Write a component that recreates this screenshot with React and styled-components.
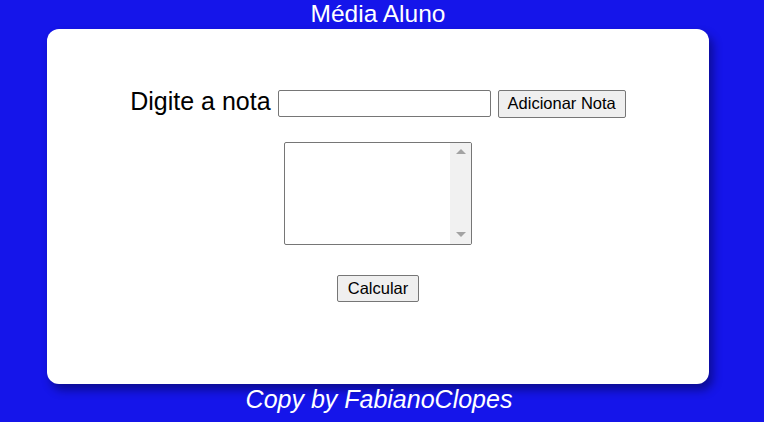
import React from "react";
import styled, { createGlobalStyle } from "styled-components";

const Global = createGlobalStyle`
  html, body { margin: 0; padding: 0; }
  body {
    background: #1515ea;
    font-family: "Liberation Sans", Arial, sans-serif;
    width: 764px;
    height: 422px;
    overflow: hidden;
  }
`;

const Page = styled.div`
  width: 756px;
  display: flex;
  flex-direction: column;
  align-items: center;
`;

const Title = styled.h1`
  margin: 0;
  height: 29px;
  font-size: 24.5px;
  font-weight: normal;
  line-height: 28px;
  color: #fff;
`;

const Card = styled.main`
  box-sizing: border-box;
  width: 662px;
  height: 355px;
  background: #fff;
  border-radius: 12px;
  box-shadow: 4px 6px 10px rgba(0, 0, 40, 0.45);
  display: flex;
  flex-direction: column;
  align-items: center;
  padding-top: 60px;
`;

const Row = styled.div`
  display: flex;
  align-items: center;
  gap: 7px;
  height: 29px;
`;

const Label = styled.label`
  font-size: 25px;
  color: #000;
  line-height: 29px;
  margin-top: -4px;
`;

const TextInput = styled.input`
  box-sizing: border-box;
  width: 213px;
  height: 27px;
  border: 1px solid #767676;
  border-radius: 2px;
  padding: 1px 2px;
  font-size: 16px;
  font-family: inherit;
`;

const Button = styled.button`
  box-sizing: border-box;
  height: ${(p) => p.$h || 28}px;
  padding: 0 ${(p) => p.$px || 8}px;
  font-family: "Liberation Sans", Arial, sans-serif;
  font-size: 16.5px;
  color: #000;
  background: #efefef;
  border: 1px solid #767676;
  border-radius: 2px;
`;

const ListBox = styled.div`
  box-sizing: border-box;
  margin-top: 24px;
  width: 188px;
  height: 103px;
  border: 1px solid #767676;
  border-radius: 2px;
  display: flex;
  justify-content: flex-end;
  overflow: hidden;
`;

const ScrollTrack = styled.div`
  width: 21px;
  background: #f1f1f1;
  display: flex;
  flex-direction: column;
  justify-content: space-between;
  align-items: center;
  padding: 6px 0 7px;
`;

const Arrow = styled.div`
  width: 0;
  height: 0;
  border-left: 5px solid transparent;
  border-right: 5px solid transparent;
  ${(p) =>
    p.$down
      ? "border-top: 5px solid #a3a3a3;"
      : "border-bottom: 5px solid #a3a3a3;"}
`;

const CalcWrap = styled.div`
  margin-top: 30px;
`;

const Footer = styled.footer`
  margin-top: 1px;
  margin-left: 2px;
  font-size: 25px;
  font-style: italic;
  color: #fff;
  line-height: 29px;
`;

export default function App() {
  return (
    <>
      <Global />
      <Page>
        <Title>Média Aluno</Title>
        <Card>
          <Row>
            <Label htmlFor="nota">Digite a nota</Label>
            <TextInput id="nota" type="text" />
            <Button $h={28} $px={9}>Adicionar Nota</Button>
          </Row>
          <ListBox>
            <ScrollTrack>
              <Arrow />
              <Arrow $down />
            </ScrollTrack>
          </ListBox>
          <CalcWrap>
            <Button $h={27} $px={10}>Calcular</Button>
          </CalcWrap>
        </Card>
        <Footer>Copy by FabianoClopes</Footer>
      </Page>
    </>
  );
}
